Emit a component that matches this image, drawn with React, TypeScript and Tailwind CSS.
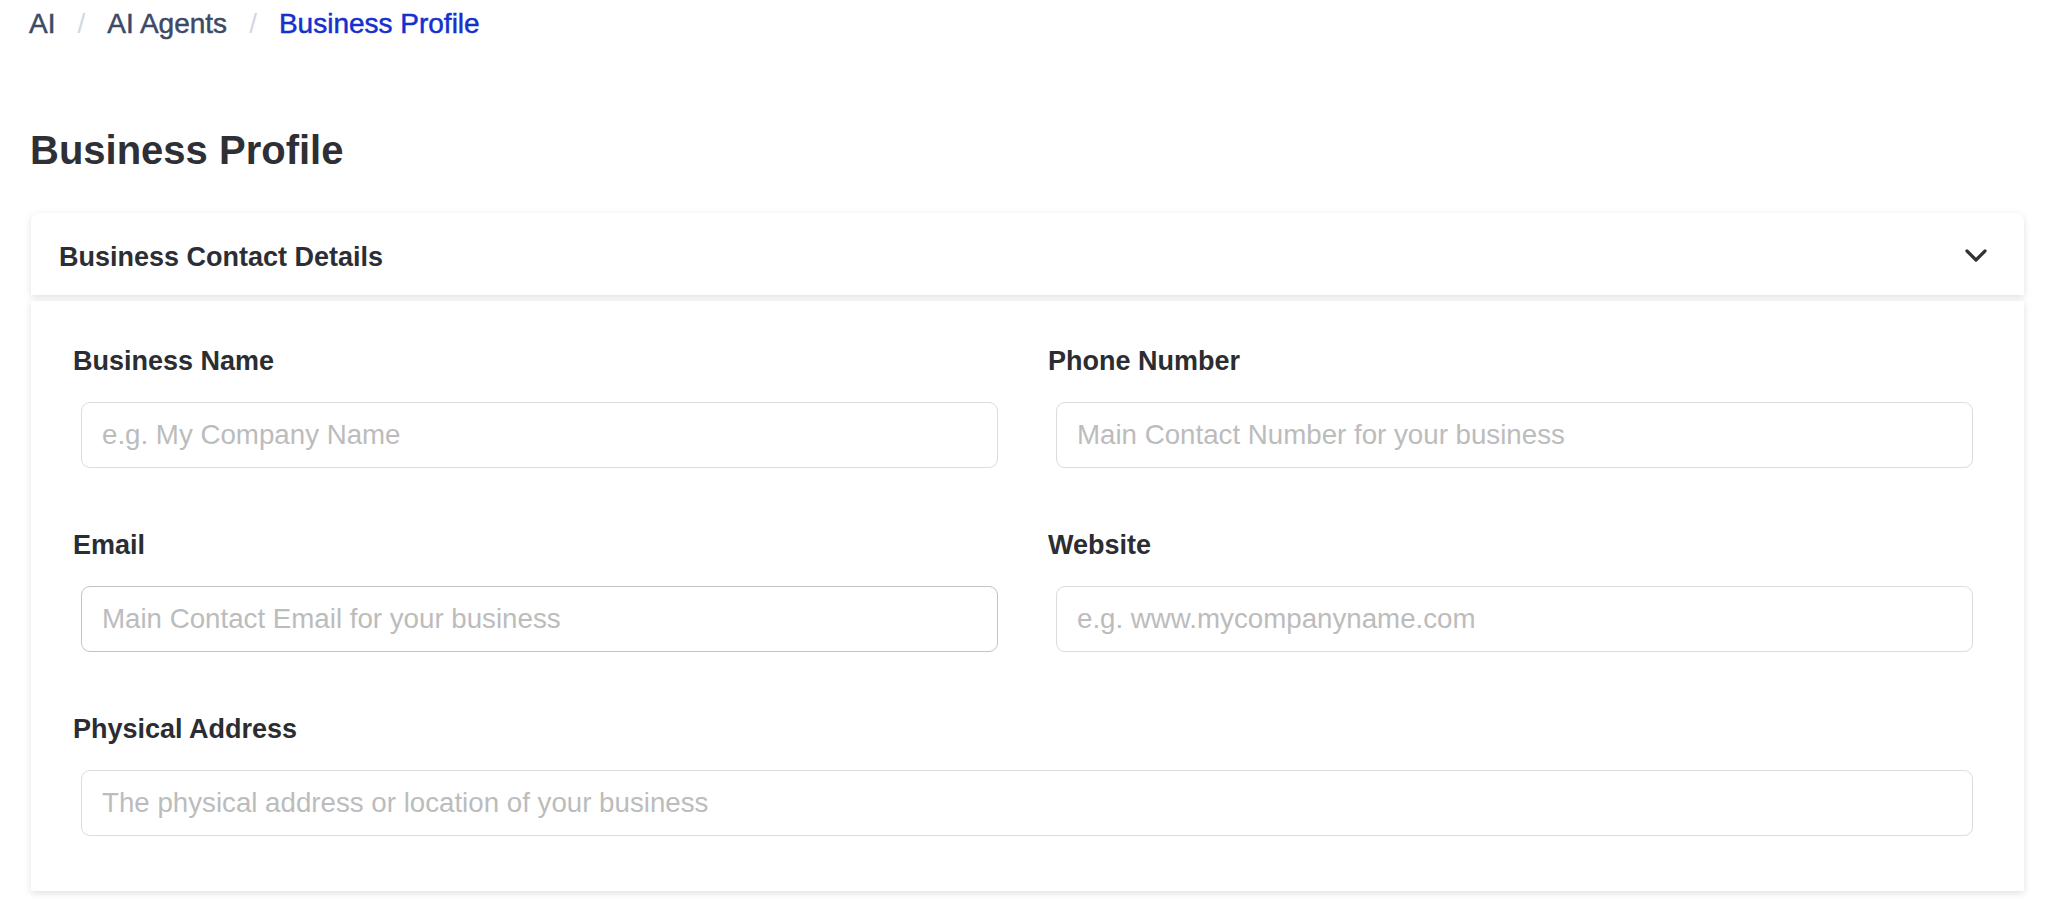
import React from 'react'

const font = { fontFamily: '"Liberation Sans", Arial, Helvetica, sans-serif' }

interface FieldProps {
  label: string
  placeholder: string
  active?: boolean
}

function Field({ label, placeholder, active }: FieldProps) {
  return (
    <div className="flex flex-col">
      <label className="text-[27px] leading-[32px] font-bold text-[#2b2d31]">{label}</label>
      <input
        type="text"
        placeholder={placeholder}
        className={
          'mx-[8px] mt-[25px] h-[66px] rounded-[9px] border bg-white px-[20px] text-[27.7px] text-[#2b2d31] outline-none placeholder:text-[#bcbcbc] ' +
          (active ? 'border-[#c3c3c3]' : 'border-[#dcdcdc]')
        }
      />
    </div>
  )
}

export default function App() {
  return (
    <div className="min-h-screen bg-white pl-[29px] pr-[24px]" style={font}>
      <nav className="flex items-center pt-[8px] text-[28px] leading-[32px] [-webkit-text-stroke:0.5px]">
        <span className="text-[#3c4a66]">AI</span>
        <span className="mx-[22px] text-[#d3d7de] [-webkit-text-stroke:0px]">/</span>
        <span className="text-[#3c4a66]">AI Agents</span>
        <span className="mx-[22px] text-[#d3d7de] [-webkit-text-stroke:0px]">/</span>
        <span className="text-[#1530cc]">Business Profile</span>
      </nav>

      <h1 className="mt-[86px] pl-[1px] text-[40px] leading-[48px] font-bold text-[#2e3035]">Business Profile</h1>

      <div className="mt-[39px] ml-[2px] flex flex-col gap-[6px]">
        <div className="flex h-[82px] items-center justify-between rounded-t-[8px] bg-white pl-[28px] pr-[36px] pt-[7px] shadow-[0_2px_7px_rgba(0,0,0,0.13)]">
          <span className="text-[27px] font-bold text-[#2c2e33]">Business Contact Details</span>
          <svg width="24" height="15" viewBox="0 0 24 15" fill="none" className="-mt-[4px]">
            <path d="M3 3 L12 12 L21 3" stroke="#333438" strokeWidth="3.2" strokeLinecap="round" strokeLinejoin="round" />
          </svg>
        </div>

        <div className="bg-white pl-[42px] pr-[43px] pt-[44px] pb-[55px] shadow-[0_2px_7px_rgba(0,0,0,0.13)]">
          <div className="grid grid-cols-2 gap-x-[42px] gap-y-[61px]">
            <Field label="Business Name" placeholder="e.g. My Company Name" />
            <Field label="Phone Number" placeholder="Main Contact Number for your business" />
            <Field label="Email" placeholder="Main Contact Email for your business" active />
            <Field label="Website" placeholder="e.g. www.mycompanyname.com" />
            <div className="col-span-2">
              <Field label="Physical Address" placeholder="The physical address or location of your business" />
            </div>
          </div>
        </div>
      </div>
    </div>
  )
}
